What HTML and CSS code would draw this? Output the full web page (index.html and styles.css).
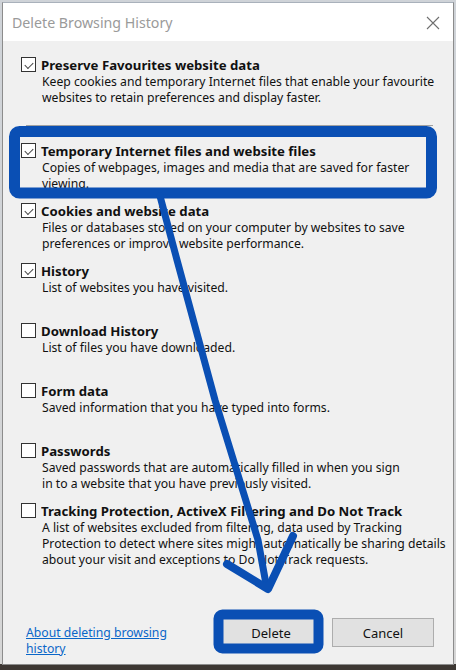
FILE: index.html
```html
<!DOCTYPE html>
<html>
<head>
<meta charset="utf-8">
<link rel="stylesheet" href="styles.css">
</head>
<body>
<div class="window">
  <div class="titlebar">
    <span class="title">Delete Browsing History</span>
    <svg class="close" width="14" height="14" viewBox="0 0 14 14"><path d="M1 1 L13 13 M13 1 L1 13" stroke="#6f6f6f" stroke-width="1.1" fill="none"/></svg>
  </div>
  <div class="content">
    <div class="item">
      <span class="cb checked"></span>
      <div class="label">Preserve Favourites website data</div>
      <div class="desc">Keep cookies and temporary Internet files that enable your favourite<br>websites to retain preferences and display faster.</div>
    </div>
    <div class="sep"></div>
    <div class="item">
      <span class="cb checked"></span>
      <div class="label">Temporary Internet files and website files</div>
      <div class="desc">Copies of webpages, images and media that are saved for faster<br>viewing.</div>
    </div>
    <div class="item">
      <span class="cb checked"></span>
      <div class="label">Cookies and website data</div>
      <div class="desc">Files or databases stored on your computer by websites to save<br>preferences or improve website performance.</div>
    </div>
    <div class="item">
      <span class="cb checked"></span>
      <div class="label">History</div>
      <div class="desc">List of websites you have visited.</div>
    </div>
    <div class="item">
      <span class="cb"></span>
      <div class="label">Download History</div>
      <div class="desc">List of files you have downloaded.</div>
    </div>
    <div class="item">
      <span class="cb"></span>
      <div class="label">Form data</div>
      <div class="desc">Saved information that you have typed into forms.</div>
    </div>
    <div class="item">
      <span class="cb"></span>
      <div class="label">Passwords</div>
      <div class="desc">Saved passwords that are automatically filled in when you sign<br>in to a website that you have previously visited.</div>
    </div>
    <div class="item">
      <span class="cb"></span>
      <div class="label clip">Tracking Protection, ActiveX Filtering and Do Not Track data</div>
      <div class="desc">A list of websites excluded from filtering, data used by Tracking<br>Protection to detect where sites might automatically be sharing details<br>about your visit and exceptions to Do Not Track requests.</div>
    </div>
    <div class="footer">
      <a class="link" href="#">About deleting browsing<br>history</a>
      <div class="buttons">
        <button class="btn">Delete</button>
        <button class="btn">Cancel</button>
      </div>
    </div>
  </div>
</div>
<svg class="annot" width="456" height="670" viewBox="0 0 456 670">
  <rect x="14.5" y="131.5" width="417" height="61.5" rx="5" fill="none" stroke="#0a4fb4" stroke-width="11"/>
  <path d="M160 196 L177 260 L215 400 L258 540 L266 584" fill="none" stroke="#0a4fb4" stroke-width="7" stroke-linecap="round" stroke-linejoin="round"/>
  <path d="M227 564 L268 589 L293 536" fill="none" stroke="#0a4fb4" stroke-width="8" stroke-linecap="round" stroke-linejoin="round"/>
  <rect x="218.5" y="614.5" width="100" height="34" rx="4" fill="none" stroke="#0a4fb4" stroke-width="10"/>
</svg>
</body>
</html>
```
FILE: styles.css
```css
html, body {
  margin: 0;
  padding: 0;
}
body {
  width: 456px;
  height: 670px;
  overflow: hidden;
  background: linear-gradient(to bottom, #cfd3d8 0, #d6d6d6 664px, #3d3733 664px);
  font-family: "Noto Sans", "DejaVu Sans", sans-serif;
  color: #111;
  position: relative;
}
.window {
  position: relative;
  box-sizing: border-box;
  margin: 2px 0 0 2px;
  width: 452px;
  height: 663px;
  border: 1px solid #8c8c8c;
  border-top-color: #a9b1bb;
  background: #f0f0f0;
  display: flex;
  flex-direction: column;
}
.titlebar {
  height: 38px;
  background: #fff;
  display: flex;
  align-items: center;
  justify-content: space-between;
  padding: 0 13px 0 9px;
  flex-shrink: 0;
}
.title {
  font-size: 14.2px;
  color: #9a9a9a;
  margin-top: 1px;
}
.close {
  display: block;
  margin-top: 1px;
}
.content {
  padding: 15px 19px 0 18px;
  display: flex;
  flex-direction: column;
}
.item {
  height: 60px;
  display: grid;
  grid-template-columns: 15px 1fr;
  column-gap: 5px;
  grid-template-rows: 18px auto;
  align-content: start;
}
.cb {
  box-sizing: border-box;
  width: 15px;
  height: 15px;
  margin-top: 1px;
  border: 1px solid #333;
  background: #fff;
  position: relative;
}
.cb.checked::after {
  content: "";
  position: absolute;
  left: 3px;
  top: 1px;
  width: 7px;
  height: 4px;
  border-left: 1.3px solid #444;
  border-bottom: 1.3px solid #444;
  transform: translate(0, 3px) rotate(-45deg);
  transform-origin: center;
}
.label {
  font-weight: bold;
  font-size: 13.2px;
  line-height: 18px;
  white-space: nowrap;
}
.label.clip {
  overflow: hidden;
  width: 362px;
}
.desc {
  grid-column: 2;
  font-size: 12.2px;
  line-height: 16px;
  padding-left: 1px;
  white-space: nowrap;
}
.sep {
  height: 1px;
  background: #a0a0a0;
  margin: 9px 0 16px 5px;
  width: 407px;
}
.footer {
  margin-top: 56px;
  display: flex;
  align-items: flex-start;
}
.link {
  margin: 7px 0 0 5px;
  font-size: 12.2px;
  line-height: 16px;
  color: #0a66c8;
  text-decoration: underline;
}
.buttons {
  margin-left: auto;
  display: flex;
  gap: 10px;
}
.btn {
  box-sizing: border-box;
  width: 102px;
  height: 29px;
  background: #e1e1e1;
  border: 1px solid #adadad;
  font-family: "Noto Sans", "DejaVu Sans", sans-serif;
  font-size: 13px;
  color: #111;
  padding: 0;
}
.annot {
  position: absolute;
  left: 0;
  top: 0;
  pointer-events: none;
}
```
